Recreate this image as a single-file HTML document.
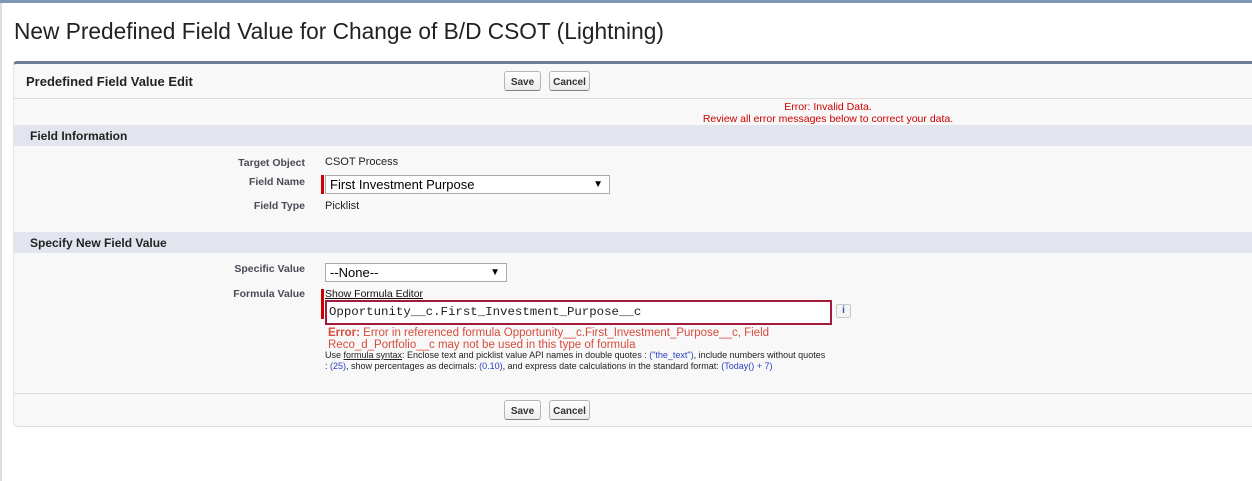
<!DOCTYPE html>
<html><head><meta charset="utf-8"><style>
*{margin:0;padding:0;box-sizing:border-box}
body{width:1252px;height:481px;background:#fff;font-family:"Liberation Sans",Arial,sans-serif;position:relative;overflow:hidden;color:#000}
.a{position:absolute;white-space:nowrap}
.lbl{font-size:10.5px;font-weight:bold;color:#4a4a56;text-align:right;width:120px}
.btn{position:absolute;height:20px;border:1px solid #b5b5b5;border-bottom-color:#7f7f7f;border-radius:3px;background:linear-gradient(#fff,#ececec);font-size:10px;font-weight:bold;color:#333;text-align:center;line-height:19px;padding-top:1px}
.sel{position:absolute;height:19px;border:1px solid #a9a9a9;background:#fff;font-size:13px;line-height:17px;padding-left:4px}
.sel span{position:absolute;right:6px;top:0;font-size:10px}
.req{position:absolute;width:3px;background:#c00}
</style></head><body>
<div class="a" style="left:0;top:0;width:1252px;height:3px;background:#7d97b8"></div>
<div class="a" style="left:0;top:3px;width:2px;height:478px;background:#ddd"></div>
<div class="a" style="left:14px;top:18px;font-size:22.7px;color:#222">New Predefined Field Value for Change of B/D CSOT (Lightning)</div>

<div class="a" style="left:13px;top:61px;width:1239px;height:366px;background:#f8f8f8;border-top:3px solid #6b7c95;border-bottom:1px solid #e0e0e0;border-left:1px solid #e5e5e5;border-radius:4px 0 0 4px"></div>
<div class="a" style="left:26px;top:74px;font-size:13px;font-weight:bold;color:#222">Predefined Field Value Edit</div>
<div class="btn" style="left:504px;top:71px;width:37px">Save</div>
<div class="btn" style="left:549px;top:71px;width:41px">Cancel</div>
<div class="a" style="left:14px;top:98px;width:1238px;height:1px;background:#dbdbdb"></div>
<div class="a" style="left:600px;top:101px;width:456px;text-align:center;font-size:10.5px;color:#c00;line-height:12px">Error: Invalid Data.<br>Review all error messages below to correct your data.</div>

<div class="a" style="left:14px;top:125px;width:1238px;height:21px;background:#e3e5ee"></div>
<div class="a" style="left:30px;top:129px;font-size:12px;font-weight:bold;color:#222">Field Information</div>
<div class="a lbl" style="left:185px;top:157px">Target Object</div>
<div class="a" style="left:325px;top:156px;font-size:11px;color:#222">CSOT Process</div>
<div class="a lbl" style="left:185px;top:176px">Field Name</div>
<div class="req" style="left:321px;top:175px;height:19px"></div>
<div class="sel" style="left:325px;top:175px;width:285px">First Investment Purpose<span>▼</span></div>
<div class="a lbl" style="left:185px;top:200px">Field Type</div>
<div class="a" style="left:325px;top:200px;font-size:11px;color:#222">Picklist</div>

<div class="a" style="left:14px;top:232px;width:1238px;height:21px;background:#e3e5ee"></div>
<div class="a" style="left:30px;top:236px;font-size:12px;font-weight:bold;color:#222">Specify New Field Value</div>
<div class="a lbl" style="left:185px;top:263px">Specific Value</div>
<div class="sel" style="left:325px;top:263px;width:182px">--None--<span>▼</span></div>
<div class="a lbl" style="left:185px;top:288px">Formula Value</div>
<div class="req" style="left:321px;top:289px;height:30px"></div>
<div class="a" style="left:325px;top:288px;font-size:10.5px;color:#111;text-decoration:underline">Show Formula Editor</div>
<div class="a" style="left:325px;top:300px;width:507px;height:25px;border:2px solid #a31b3a;background:#fff;font-family:'Liberation Mono',monospace;font-size:12.4px;line-height:20px;padding-left:2px;color:#222">Opportunity__c.First_Investment_Purpose__c</div>
<div class="a" style="left:836px;top:304px;width:15px;height:14px;border:1px solid #c8c8c8;border-radius:2px;background:#f4f4f4;font-size:10px;font-weight:bold;color:#2a5db0;text-align:center;line-height:12px">i</div>
<div class="a" style="left:328px;top:327px;font-size:11.5px;color:#d74c3c;line-height:12px"><b>Error:</b> Error in referenced formula Opportunity__c.First_Investment_Purpose__c, Field<br>Reco_d_Portfolio__c may not be used in this type of formula</div>
<div class="a" style="left:325px;top:350px;font-size:9px;color:#222;line-height:11px">Use <u>formula syntax</u>: Enclose text and picklist value API names in double quotes : <span style="color:#2a3fc0">("the_text")</span>, include numbers without quotes<br>: <span style="color:#2a3fc0">(25)</span>, show percentages as decimals: <span style="color:#2a3fc0">(0.10)</span>, and express date calculations in the standard format: <span style="color:#2a3fc0">(Today() + 7)</span></div>

<div class="a" style="left:14px;top:393px;width:1238px;height:1px;background:#dbdbdb"></div>
<div class="btn" style="left:504px;top:400px;width:37px">Save</div>
<div class="btn" style="left:549px;top:400px;width:41px">Cancel</div>
</body></html>
